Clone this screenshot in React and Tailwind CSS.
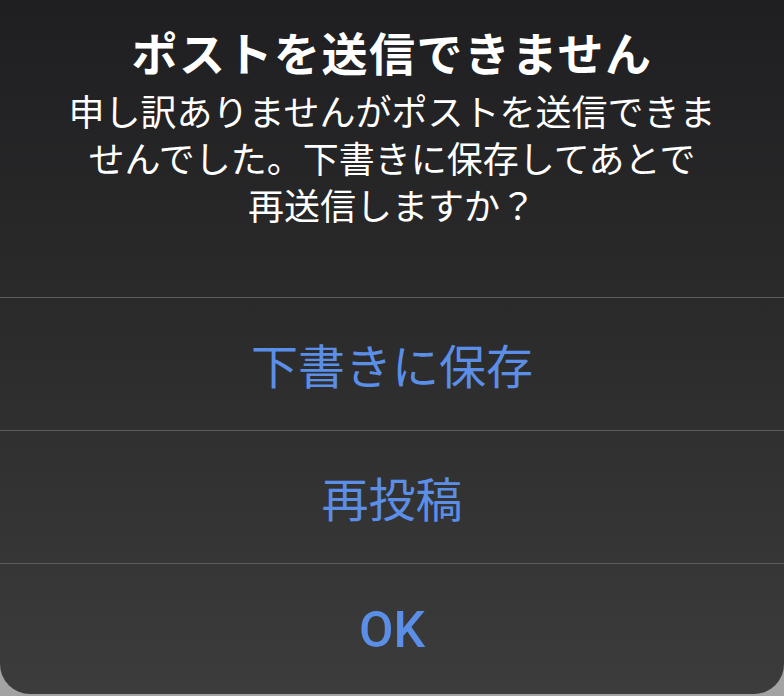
import React from 'react';

const jp = { fontFamily: '"Noto Sans CJK JP", "Noto Sans", sans-serif' };

const AlertButton = ({ label, bold }) => (
  <button
    className={
      'h-[133px] w-full shrink-0 border-t border-[#5c5c5e] flex items-center justify-center text-[#5b8fe7] ' +
      (bold ? 'text-[50px] font-medium' : 'text-[47px] font-normal')
    }
    style={bold ? { fontFamily: 'Roboto, "Noto Sans CJK JP", sans-serif' } : jp}
  >
    {label}
  </button>
);

const App = () => {
  return (
    <div className="w-[784px] h-[696px] bg-[#a3a3a3] overflow-hidden">
      <div className="h-[694px] w-full rounded-b-[30px] bg-gradient-to-b from-[#1f1f21] via-[#2c2c2d] to-[#3d3c3c] flex flex-col">
        <div className="h-[297px] shrink-0 text-center text-white" style={jp}>
          <h1 className="pt-[23px] text-[46px] font-bold leading-[56px] tracking-[1.5px]">
            ポストを送信できません
          </h1>
          <p className="mt-[8px] text-[36px] leading-[47px]">
            申し訳ありませんがポストを送信できま
            <br />
            せんでした。下書きに保存してあとで
            <br />
            再送信しますか？
          </p>
        </div>
        <AlertButton label="下書きに保存" />
        <AlertButton label="再投稿" />
        <AlertButton label="OK" bold />
      </div>
    </div>
  );
};

export default App;
